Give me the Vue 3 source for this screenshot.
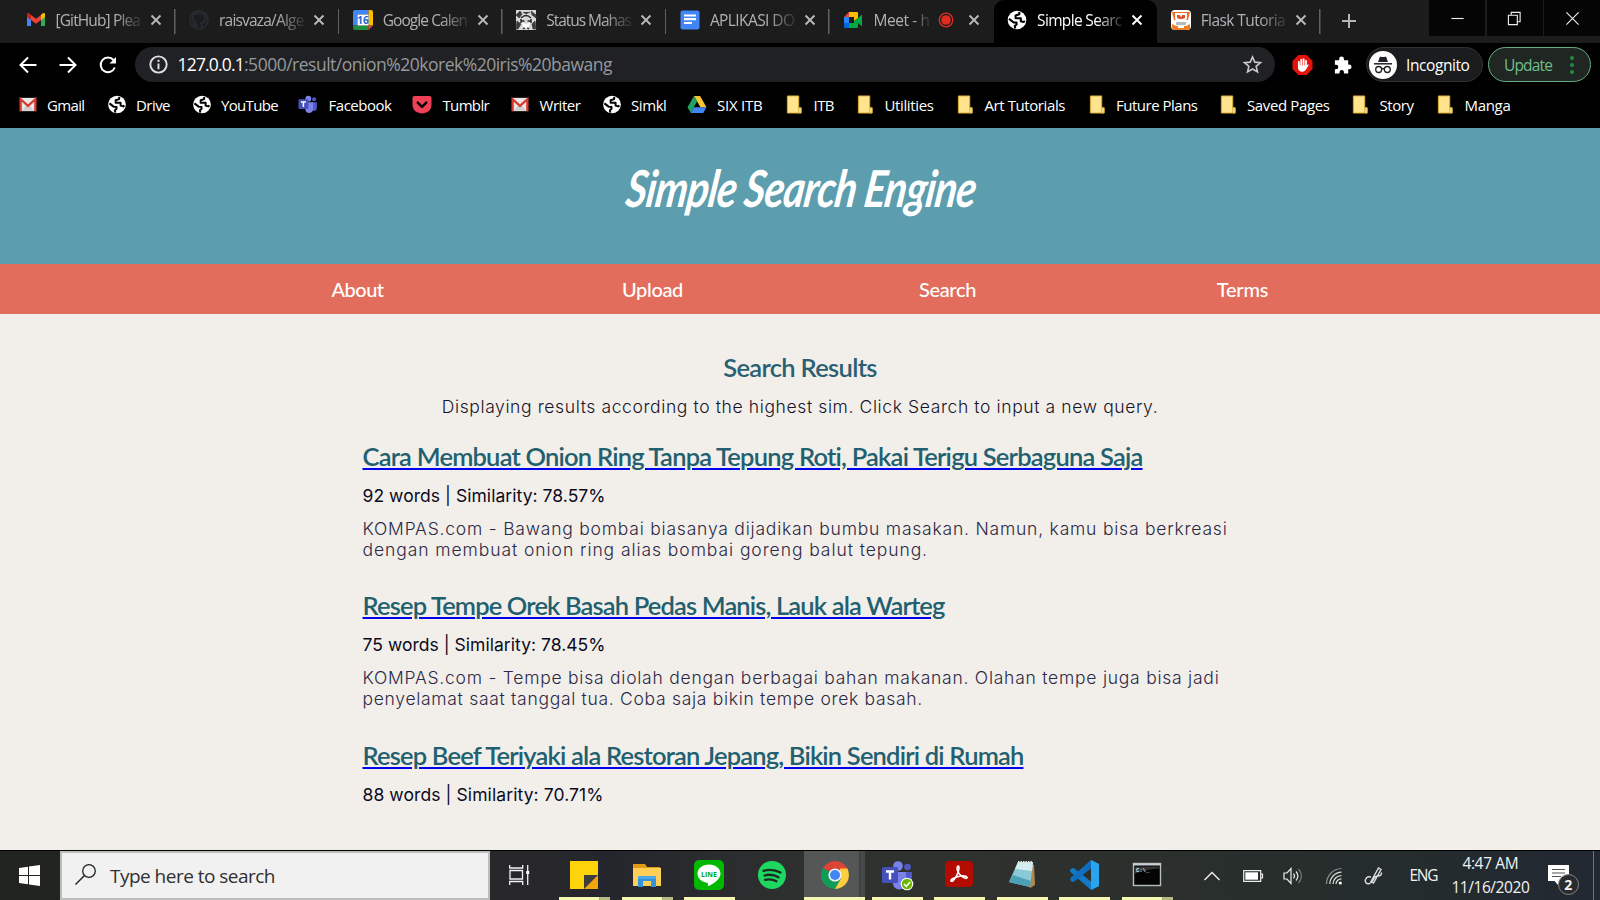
<script setup>
// Adjusts letter spacing so a label takes exactly the given width.
const vFit = {
  mounted(el, { value }) {
    if (!value) return
    const natural = el.getBoundingClientRect().width
    el.style.letterSpacing = ((value - natural) / el.textContent.length).toFixed(3) + 'px'
  },
}

const globe =
  '<circle cx="10" cy="10" r="9.300" fill="#fff"/><path d="M2 8.800l4.800 3.700h2.700v2l-1.700 1.500.4 2.500M12.300 2v2.300L8.600 5.500v2.700h5.200v3l2.700.8 1.300-1" fill="none" stroke="#000" stroke-width="2.100" stroke-linejoin="round"/>'
const gmailOld =
  '<rect x="1.500" y="3" width="17" height="14" fill="#e9e9e9"/><path d="M3.500 16.500l4.500-5.500h4l4.500 5.500z" fill="#cfcfcf"/><path d="M2.300 17V4.500l7.700 7 7.700-7V17" fill="none" stroke="#d93a2f" stroke-width="2.400"/>'
const folder =
  '<path d="M3 1h12v12.500h2.500V19H3z" fill="#ffe38d" stroke="#d9a92b" stroke-width="1"/><path d="M15 19v-5.500h2.500V19z" fill="#ffe99e" stroke="#c9a02c" stroke-width=".8"/>'
const teams =
  '<circle cx="16" cy="6" r="4.800" fill="#7b83eb"/><circle cx="25.500" cy="7" r="3.300" fill="#5059c9"/><path d="M22 12h8v9c0 4-3 6-6 5z" fill="#5059c9"/><path d="M11 12h13v11c0 8-13 9-13 0z" fill="#7b83eb"/><rect x="0" y="7" width="16" height="16" rx="1.500" fill="#4650ba"/><path d="M4 11.500h8M8 11.500v8" stroke="#fff" stroke-width="2.400"/>'

const art = {
  globe,
  gmailOld,
  folder,
  teams,
  gmail:
    '<path d="M1 4.500V16h4V8z" fill="#4285f4"/><path d="M15 8v8h4V4.500z" fill="#34a853"/><path d="M15 5v5l4-3V4.500c0-2-2-2-4 .5z" fill="#fbbc04"/><path d="M1 4.500V7l4 3V5C3 2.500 1 2.500 1 4.500z" fill="#c5221f"/><path d="M5 5l5 3.800L15 5v5l-5 3.800L5 10z" fill="#ea4335"/>',
  github:
    '<path d="M7.500 18.500v-3.200c-3 .5-3.500-1.300-4.300-2M12.500 18.500v-4c0-.8-.2-1.200-.6-1.600 3-.3 4.600-1.600 4.600-4.600 0-1.200-.4-2.100-1.100-2.900.2-.9.200-1.800-.1-2.600-1.100 0-2 .5-2.800 1.100a9 9 0 0 0-5 0C6.700 3.300 5.800 2.800 4.700 2.800c-.3.800-.3 1.700-.1 2.600C3.900 6.200 3.500 7.100 3.500 8.300c0 3 1.600 4.300 4.600 4.600" fill="none" stroke="#252b31" stroke-width="2"/><circle cx="10" cy="10" r="9" fill="none" stroke="#252b31" stroke-width="1.800"/>',
  calendar:
    '<path d="M0 2q0-2 2-2h13.500v4.500h-11v11H0z" fill="#4285f4"/><path d="M15.500 0H18q2 0 2 2v13.500h-4.500z" fill="#fbbc04"/><path d="M0 15.500h15.500V20H2q-2 0-2-2z" fill="#1e8e3e"/><path d="M15.500 15.500H20L15.500 20z" fill="#ea4335"/><path d="M4.500 4.500h11v11h-11z" fill="#fff"/><text x="10" y="13.600" text-anchor="middle" font-size="10" font-weight="700" font-family="Open Sans" fill="#1a66d6">16</text>',
  emblem:
    '<path d="M0 0h20v20H0z" fill="#d8d8d8"/><path d="M0 5l4-4 2 3-3 4zM15 1l5 4v3l-4-3zM1 11l4 3-3 5H0zM19 11l-3 3 1 5h3zM7 2l3 2 4-2" fill="#3a3a3a" stroke="#444" stroke-width=".8"/><path d="M5 8q5-5 10 0M5.500 11h3M11.500 11h3M5 9v4M15 9v4M7 19l3-2 3 2" fill="none" stroke="#292929" stroke-width="1.500"/><path d="M6 12.500l4 1.500 4-1.500-1 4-3 2-3-2z" fill="#fff"/>',
  docs:
    '<rect x=".5" y=".5" width="19" height="19" rx="2" fill="#4285f4"/><path d="M4 5.500h12M4 9.200h12M4 13h8" stroke="#fff" stroke-width="2.200"/>',
  meet:
    '<path d="M1 7l5-5v5z" fill="#ea4335"/><path d="M6 2h8q1 0 1 1v5l-4 3V7H6z" fill="#fbbc04"/><path d="M1 7h5v6H1z" fill="#2684fc"/><path d="M1 13h5v5H2q-1 0-1-1z" fill="#0066da"/><path d="M6 13h5v-2l4-3 4-3.500v12L15 13v4q0 1-1 1H6z" fill="#00a846"/>',
  flask:
    '<rect x="0" y="0" width="20" height="20" rx="4" fill="#fff"/><path d="M1 2h18l-2 8H3z" fill="#f26a21"/><path d="M4 3h12v6q-6 5-12 0z" fill="#fff"/><path d="M6 5h3v1.500h2V5h3v3q-4 2-8 0z" fill="#e34e26"/><path d="M5 12h10v3H5z" fill="#b9b9b9"/><path d="M1 14l4 2h10l4-2v5l-3 1H3l-2-2z" fill="#f47b20"/><path d="M7 16h6v2H7z" fill="#fff"/>',
  pocket:
    '<path d="M2 1h16q2 0 2 2v7c0 12.500-20 12.500-20 0V3q0-2 2-2z" fill="#ee4056"/><path d="M5.500 8l4.500 4.500L14.500 8" fill="none" stroke="#000" stroke-width="2.600" stroke-linecap="round" stroke-linejoin="round"/>',
  drive:
    '<path d="M6.800 1h6.400L20 13h-6.400z" fill="#fbc634"/><path d="M6.800 1L10 6.800 3.400 18.800 0 13z" fill="#1fa463"/><path d="M6.600 13H20l-3.400 5.900H3.300z" fill="#4285f4"/>',
  windows:
    '<path d="M0 3l9-1.300V10H0zM10 1.500L21 0v10H10zM0 11h9v8.300L0 18zM10 11h11v10l-11-1.500z" fill="#fff"/>',
  search:
    '<circle cx="14" cy="7" r="6.300" fill="none" stroke="#222" stroke-width="1.300"/><path d="M9.500 11.500L.5 20.500" stroke="#222" stroke-width="1.500"/>',
  taskview:
    '<path d="M.7 0v3h13V0M.7 20v-3.500h13V20M1 5.500h12.500v8.500H1zM18.700 0v20" fill="none" stroke="#f2f2f2" stroke-width="1.300"/><path d="M17.200 6h3v3h-3z" fill="#fff"/>',
  sticky:
    '<path d="M1 1h28v14L15 29H1z" fill="#ffd30a"/><path d="M15 15h14v14H15z" fill="#f0a70c"/><path d="M15 15h14L15 29z" fill="#3d3d3d"/>',
  explorer:
    '<path d="M1 4h12l2 3h13v5H1z" fill="#e09a12"/><path d="M1 8h28v18H1z" fill="#ffcf58"/><path d="M6 27V16h18v11h-5v-6h-8v6z" fill="#3592dc"/><path d="M6 16h18v3H6z" fill="#49a7eb"/>',
  line:
    '<rect width="30" height="30" rx="5" fill="#00b900"/><path d="M15 4.500c-6.600 0-11.500 4-11.500 9.200 0 5 4.500 8.300 9.500 9 1.500.3 1 1.500.8 3.500 3-1 12.700-6 12.700-12.500C26.500 8.500 21.600 4.500 15 4.500z" fill="#fff"/><text x="15" y="16.500" text-anchor="middle" font-size="7" font-weight="700" font-family="Open Sans" fill="#00a800">LINE</text>',
  spotify:
    '<circle cx="15" cy="15" r="14" fill="#1ed760"/><path d="M6.500 10.800c5.500-1.600 12-1 17 1.700M7.500 15.500c4.700-1.300 9.800-.7 14 1.700M8 19.800c4-1 8-.5 11.500 1.500" fill="none" stroke="#1c2a22" stroke-width="2.300" stroke-linecap="round"/>',
  chrome:
    '<path d="M15 15L2.900 8A14 14 0 0 1 27.100 8z" fill="#db4437"/><path d="M2.900 8A14 14 0 0 0 15 29l6-10.500-6-3.500z" fill="#0f9d58"/><path d="M27.100 8A14 14 0 0 1 15 29l6-10.500-1-7.500V8z" fill="#ffcd40"/><path d="M15 8h12.100" stroke="#db4437"/><circle cx="15" cy="15" r="6.600" fill="#f1f1f1"/><circle cx="15" cy="15" r="5" fill="#4285f4"/>',
  teamsBadge:
    teams + '<circle cx="25" cy="24" r="6.300" fill="#fff"/><circle cx="25" cy="24" r="5.200" fill="#6bb700"/><path d="M22 24l2.300 2.300 3.800-4.300" fill="none" stroke="#fff" stroke-width="1.500"/>',
  acrobat:
    '<rect x="1" y="1" width="28" height="26" rx="4" fill="#b30b00"/><path d="M7 21c-1-2 6-4.500 10-5 4-.4 6.500.4 6 1.900-1 1.700-7-2-9-5.900-1.500-3-1-6 .2-6 1.500 0 .8 5-1.500 9.500S8 22 7 21z" fill="none" stroke="#fff" stroke-width="1.600"/>',
  notepad:
    '<path d="M12 3l15 2 1 20-5 3z" fill="#b28a4a"/><path d="M11 2h15l-3 25-21-5z" fill="#8cc9d6"/><path d="M11 2h15l-1 9L8 9z" fill="#d3ecef"/><path d="M2 22l4-7 18 6-1 6z" fill="#4ba1b5"/><path d="M11 2h15" stroke="#dedede" stroke-width="2" stroke-dasharray="1.500 1"/>',
  vscode:
    '<path d="M22 0l8 4v22l-8 4L2 12.500Q0 11 1.500 9.500L3 8.300q1-.6 2 0L22 21.500z" fill="#1279c6"/><path d="M22 0v8.500L5 21.700q-1 .6-2 0l-1.500-1.200Q0 19 2 17.500z" fill="#0f6fbc"/><path d="M22 0l8 4v22l-8 4z" fill="#2aa3ef"/>',
  terminal:
    '<rect x="1.500" y="3.500" width="27" height="22" fill="#050505" stroke="#b9bdc2" stroke-width="1.400"/><path d="M1 4.500h28" stroke="#c9ced4" stroke-width="2"/><path d="M2.500 14V6.500h25v2Q14 9 2.500 14z" fill="#333"/><text x="4" y="12" font-size="5.500" font-weight="700" font-family="Liberation Mono" fill="#eee">C:\\_</text>',
  caret: '<path d="M2.500 14L10 6.500l7.500 7.500" fill="none" stroke="#eee" stroke-width="1.400"/>',
  battery:
    '<path d="M.7 4.700h17v10.600H.7zM18 8h1.500v4H18" fill="none" stroke="#eee" stroke-width="1.200"/><path d="M2.300 6.300H15v7.400H2.300z" fill="#fff"/>',
  volume:
    '<path d="M1 7h3l4-4.500v15L4 13H1z" fill="none" stroke="#eee" stroke-width="1.200"/><path d="M10.500 7.500q2 2.500 0 5M13 5.500q3.800 4.500 0 9" fill="none" stroke="#eee" stroke-width="1.200"/><path d="M15.500 3q6 7 0 14" fill="none" stroke="#777" stroke-width="1.200"/>',
  wifi:
    '<path d="M2.500 18A15.500 15.500 0 0 1 17.500 2.500" fill="none" stroke="#8b8f90" stroke-width="1.200"/><path d="M5.800 18A12 12 0 0 1 17.500 6.200M9 18a8.700 8.700 0 0 1 8.500-8.500M12 18a5.500 5.500 0 0 1 5.500-5.200" fill="none" stroke="#ddd" stroke-width="1.200"/><circle cx="16.300" cy="17" r="1.600" fill="#fff"/>',
  pen:
    '<path d="M7 15.500L14.500 2l2.500 1.500L9.500 17zM7 11c-4-1-6.500 2-5.500 5s5.500 2 7-1 2-5 5-5 5-1.500 3.500-3.500" fill="none" stroke="#ddd" stroke-width="1.400"/>',
}

const tabs = [
  { icon: 'gmail', title: '[GitHub] Plea' },
  { icon: 'github', title: 'raisvaza/Alge' },
  { icon: 'calendar', title: 'Google Calen' },
  { icon: 'emblem', title: 'Status Mahas' },
  { icon: 'docs', title: 'APLIKASI DO' },
  { icon: 'meet', title: 'Meet - h', rec: true },
  { icon: 'globe', title: 'Simple Searc', active: true },
  { icon: 'flask', title: 'Flask Tutoria' },
]

// x: left edge of the item, t: distance from the edge to the label, w: label width
const marks = [
  { x: 18, t: 29.5, w: 37.5, icon: 'gmailOld', label: 'Gmail' },
  { x: 107, t: 29.5, w: 34, icon: 'globe', label: 'Drive' },
  { x: 192, t: 29.5, w: 57, icon: 'globe', label: 'YouTube' },
  { x: 298, t: 31, w: 63, icon: 'teams', label: 'Facebook' },
  { x: 412, t: 31, w: 46.5, icon: 'pocket', label: 'Tumblr' },
  { x: 510, t: 30, w: 41, icon: 'gmailOld', label: 'Writer' },
  { x: 602, t: 29.5, w: 35.5, icon: 'globe', label: 'Simkl' },
  { x: 687, t: 30.5, w: 45.5, icon: 'drive', label: 'SIX ITB' },
  { x: 784, t: 30, w: 20.5, icon: 'folder', label: 'ITB' },
  { x: 855, t: 30, w: 49, icon: 'folder', label: 'Utilities' },
  { x: 955, t: 30, w: 80.5, icon: 'folder', label: 'Art Tutorials' },
  { x: 1087, t: 29.5, w: 81.5, icon: 'folder', label: 'Future Plans' },
  { x: 1218, t: 29.5, w: 82.5, icon: 'folder', label: 'Saved Pages' },
  { x: 1350, t: 30, w: 34, icon: 'folder', label: 'Story' },
  { x: 1435, t: 30, w: 46, icon: 'folder', label: 'Manga' },
]
const markColumns = marks.map((m, i) => (i < marks.length - 1 ? marks[i + 1].x - m.x + 'px' : '1fr')).join(' ')

const nav = [
  { label: 'About', w: 52 },
  { label: 'Upload', w: 61 },
  { label: 'Search', w: 57.2 },
  { label: 'Terms', w: 51.6 },
]

const results = [
  {
    title: 'Cara Membuat Onion Ring Tanpa Tepung Roti, Pakai Terigu Serbaguna Saja', w: 780.5,
    meta: '92 words | Similarity: 78.57%', mw: 243,
    lines: [
      { text: 'KOMPAS.com - Bawang bombai biasanya dijadikan bumbu masakan. Namun, kamu bisa berkreasi', w: 865 },
      { text: 'dengan membuat onion ring alias bombai goreng balut tepung.', w: 565.5 },
    ],
  },
  {
    title: 'Resep Tempe Orek Basah Pedas Manis, Lauk ala Warteg', w: 582,
    meta: '75 words | Similarity: 78.45%', mw: 243,
    lines: [
      { text: 'KOMPAS.com - Tempe bisa diolah dengan berbagai bahan makanan. Olahan tempe juga bisa jadi', w: 857 },
      { text: 'penyelamat saat tanggal tua. Coba saja bikin tempe orek basah.', w: 560.5 },
    ],
  },
  {
    title: 'Resep Beef Teriyaki ala Restoran Jepang, Bikin Sendiri di Rumah', w: 661,
    meta: '88 words | Similarity: 70.71%', mw: 241,
    lines: [],
  },
]

const apps = [
  { icon: 'sticky', run: 'stack' },
  { icon: 'explorer', run: 'stack' },
  { icon: 'line', run: 'one' },
  { icon: 'spotify', run: '' },
  { icon: 'chrome', run: 'wide', current: true },
  { icon: 'teamsBadge', run: 'one' },
  { icon: 'acrobat', run: 'one' },
  { icon: 'notepad', run: 'one' },
  { icon: 'vscode', run: 'one' },
  { icon: 'terminal', run: 'stack' },
]
const tray = ['caret', 'battery', 'volume', 'wifi', 'pen']
</script>

<template>
  <div class="screen">
    <div class="tabstrip">
      <div v-for="(t, i) in tabs" :key="i" class="tab" :class="{ active: t.active, last: tabs[i + 1]?.active }">
        <svg class="fav" viewBox="0 0 20 20" v-html="art[t.icon]"></svg>
        <div class="tab-title" :class="{ short: t.rec }"><span v-fit="t.rec ? 56 : 84.5">{{ t.title }}</span></div>
        <svg v-if="t.rec" class="rec" viewBox="0 0 16 16"><circle cx="8" cy="8" r="6.800" fill="none" stroke="#d93025" stroke-width="1.300" /><circle cx="8" cy="8" r="4.800" fill="#e02b20" /></svg>
        <svg class="x" viewBox="0 0 12 12"><path d="M1.500 1.500l9 9M10.500 1.500l-9 9" /></svg>
      </div>
      <svg class="plus" viewBox="0 0 16 16"><path d="M8 1v14M1 8h14" /></svg>
      <div class="controls">
        <div><svg viewBox="0 0 16 16"><path d="M1.500 8h13" /></svg></div>
        <div><svg viewBox="0 0 16 16"><path d="M1.500 4.500h9.500v10H1.500zM4.500 4.500v-3H14v10h-3" /></svg></div>
        <div><svg viewBox="0 0 16 16"><path d="M1.500 1.500l13 13M14.500 1.500l-13 13" /></svg></div>
      </div>
    </div>

    <div class="toolbar">
      <svg class="nav-ic" viewBox="0 0 20 20"><path d="M18.500 10H2.500M10 2.500L2.500 10l7.500 7.500" /></svg>
      <svg class="nav-ic" viewBox="0 0 20 20"><path d="M1.500 10h16M10 2.500l7.500 7.500-7.500 7.500" /></svg>
      <svg class="nav-ic" viewBox="0 0 20 20"><path d="M16.800 12.500A7.300 7.300 0 1 1 15.500 5l1.500 2" /><path d="M18 2v6.500h-6.500z" fill="#fff" stroke="none" /></svg>
      <div class="omnibox">
        <svg class="info" viewBox="0 0 20 20"><circle cx="10" cy="10" r="8.600" /><path d="M10 9v6M10 5v2.300" /></svg>
        <span v-fit="66.5" class="host">127.0.0.1</span><span v-fit="368" class="path">:5000/result/onion%20korek%20iris%20bawang</span>
        <svg class="star" viewBox="0 0 20 20"><path d="M10 2l2.400 5.500 6 .5-4.600 3.900 1.400 5.900L10 14.700l-5.200 3.100 1.400-5.900L1.600 8l6-.5z" /></svg>
      </div>
      <svg class="hand" viewBox="0 0 22 22"><path d="M6.500 0h9L22 6.500v9L15.500 22h-9L0 15.500v-9z" fill="#e3120b" /><path d="M7 13V7.500M9.600 12V5M12.200 12V4.500M14.800 12V6.500" stroke="#fff" stroke-width="2" stroke-linecap="round" /><path d="M6 11.500h9.800l1.200-1.200q1.200 0 .7 1L14.500 16.500q-1.300 2-3.500 2-5 0-5-5z" fill="#fff" /></svg>
      <svg class="puzzle" viewBox="0 0 20 20"><path d="M2 5.500h4.500V4a2.500 2.500 0 0 1 5 0v1.500H16V10h1a2.500 2.500 0 0 1 0 5h-1v4.500h-4.500V18a2.300 2.300 0 0 0-4.600 0v1.500H2V15h1.200a2.300 2.300 0 0 0 0-4.800H2z" fill="#fff" /></svg>
      <div class="incognito">
        <svg viewBox="0 0 28 28"><circle cx="14" cy="14" r="14" fill="#fff" /><path d="M9 11l2-5.500q3 1.200 6 0L19 11z" fill="#202124" /><path d="M5 12.800h18" stroke="#202124" stroke-width="1.500" /><circle cx="9.700" cy="18.500" r="3" fill="none" stroke="#202124" stroke-width="1.300" /><circle cx="18.300" cy="18.500" r="3" fill="none" stroke="#202124" stroke-width="1.300" /><path d="M12.700 18q1.300-1 2.600 0" fill="none" stroke="#202124" stroke-width="1.300" /></svg>
        <span v-fit="63.5">Incognito</span>
      </div>
      <div class="update"><span v-fit="48">Update</span><svg viewBox="0 0 6 20"><circle cx="3" cy="3" r="2" /><circle cx="3" cy="10" r="2" /><circle cx="3" cy="17" r="2" /></svg></div>
    </div>

    <div class="bookmarks" :style="{ gridTemplateColumns: markColumns }">
      <div v-for="m in marks" :key="m.label" class="mark" :style="{ gridTemplateColumns: m.t + 'px auto' }">
        <svg :viewBox="m.icon === 'teams' ? '0 0 31 31' : '0 0 20 20'" v-html="art[m.icon]"></svg>
        <span v-fit="m.w">{{ m.label }}</span>
      </div>
    </div>

    <header><h1>Simple Search Engine</h1></header>
    <nav>
      <a v-for="n in nav" :key="n.label"><span v-fit="n.w">{{ n.label }}</span></a>
    </nav>
    <main>
      <h2><span v-fit="153.5">Search Results</span></h2>
      <p class="lead"><span v-fit="716.5">Displaying results according to the highest sim. Click Search to input a new query.</span></p>
      <article v-for="r in results" :key="r.title">
        <a class="title"><span v-fit="r.w">{{ r.title }}</span></a>
        <div class="meta"><span v-fit="r.mw">{{ r.meta }}</span></div>
        <p v-if="r.lines.length"><span v-for="l in r.lines" :key="l.text" v-fit="l.w">{{ l.text }}</span></p>
      </article>
    </main>

    <footer>
      <div class="start"><svg viewBox="0 0 21 21" v-html="art.windows"></svg></div>
      <div class="searchbox"><svg viewBox="0 0 21 21" v-html="art.search"></svg><span v-fit="165">Type here to search</span></div>
      <div class="taskview"><svg viewBox="0 0 21 21" v-html="art.taskview"></svg></div>
      <div v-for="a in apps" :key="a.icon" class="app" :class="[a.run, { current: a.current }]">
        <svg viewBox="0 0 30 30" v-html="art[a.icon]"></svg>
        <i v-if="a.run"></i>
      </div>
      <div class="tray">
        <svg v-for="t in tray" :key="t" viewBox="0 0 20 20" v-html="art[t]"></svg>
      </div>
      <div class="lang"><span v-fit="28">ENG</span></div>
      <div class="clock"><span v-fit="56">4:47 AM</span><span v-fit="78">11/16/2020</span></div>
      <div class="notes">
        <svg viewBox="0 0 21 20"><path d="M0 0h21v16h-6l-4.500 4.500L6.500 16H0z" fill="#fff" /><path d="M4 4.500h13M4 8h13M4 11.500h9" stroke="#555" stroke-width="1.200" /></svg>
        <b>2</b>
      </div>
    </footer>
  </div>
</template>

<style>
html,
body {
  margin: 0;
  background: #f2efea;
}
</style>

<style scoped>
* { box-sizing: border-box; }
.screen {
  width: 1600px;
  height: 900px;
  overflow: hidden;
  display: grid;
  grid-template-rows: 42.5px 45px 40.5px 136px 50px 536px 50px;
  font-family: "Open Sans", "Noto Sans", sans-serif;
  font-size: 15.5px;
  background: #000;
}
span { display: inline-block; white-space: nowrap; flex: none; }
svg { display: block; flex: none; overflow: visible; }

.tabstrip { display: flex; align-items: center; padding-left: 12px; background: #1c1c1c; }
.tab {
  width: 163.600px;
  height: 42.500px;
  flex: none;
  display: flex;
  align-items: center;
  padding: 0 14px 2px 13.500px;
  color: #b0b2b5;
  background: linear-gradient(#606164, #606164) right 0 top 9px / 1.500px 25px no-repeat;
}
.tab.active { background: #000; color: #fff; border-radius: 10px 10px 0 0; box-shadow: 0 20px 0 #000; }
.tab.last { background: none; border-bottom-right-radius: 10px; }
.fav { width: 20px; height: 20px; margin-right: 10px; }
.tab-title {
  width: 86px;
  line-height: 40px;
  overflow: hidden;
  -webkit-mask-image: linear-gradient(90deg, #000 68%, transparent 104%);
  mask-image: linear-gradient(90deg, #000 68%, transparent 104%);
}
.tab-title.short { width: 57px; }
.rec { width: 16px; height: 16px; margin: 0 0 0 8px; }
.tab .x { width: 12px; height: 12px; margin-left: auto; stroke: #b8babd; stroke-width: 1.900; }
.tab.active .x { stroke: #fff; }
.plus { width: 16px; margin: 0 0 0 20px; stroke: #b5b5b5; stroke-width: 2; }
.controls { display: grid; grid-template-columns: 56px 56px 56px; gap: 1.500px; height: 36px; margin-left: auto; align-self: flex-start; }
.controls div { background: #050505; display: grid; place-items: center; }
.controls svg { width: 15px; height: 15px; fill: none; stroke: #eee; stroke-width: 1.200; }

.toolbar { display: flex; align-items: center; padding: 0 0 1px 17.500px; }
.nav-ic { width: 20px; height: 20px; margin-right: 20px; fill: none; stroke: #fff; stroke-width: 2; }
.omnibox {
  width: 1140px;
  height: 35px;
  margin-left: -2.500px;
  padding: 0 13px 0 13.500px;
  border-radius: 18px;
  display: flex;
  align-items: center;
  background: #202124;
  font-size: 17.500px;
  line-height: 35px;
}
.info { width: 19px; margin-right: 10px; fill: none; stroke: #e0e0e0; stroke-width: 2; }
.host { color: #fff; }
.path { color: #96999d; }
.star { width: 19px; margin-left: auto; fill: none; stroke: #c8c8c8; stroke-width: 1.700; }
.hand { width: 21px; height: 20px; margin-left: 17px; }
.puzzle { width: 19px; height: 19px; margin-left: 20px; }
.incognito { width: 117px; height: 35px; margin-left: 14px; padding-left: 2px; border: 1.500px solid #303134; border-radius: 18px; background: #1b1c1e; color: #fff; display: flex; align-items: center; }
.incognito svg { width: 28px; margin-right: 9px; }
.update { width: 103px; height: 35px; margin-left: 5px; padding-left: 15px; border: 1.500px solid #64ad7d; border-radius: 18px; background: #202723; color: #70bd8b; display: flex; align-items: center; }
.update svg { width: 6px; height: 20px; margin-left: 17px; fill: #1e8e3e; }

.bookmarks { display: grid; padding: 7px 0 0 17.500px; color: #fff; align-items: start; }
.mark { display: grid; align-items: center; justify-items: start; line-height: 20px; font-size: 15px; }
.mark svg { width: 20px; height: 19px; }

header { background: #5c9dae; text-align: center; }
h1 {
  margin: 0;
  padding: 33px 0 0 10px;
  font: italic 700 51px/54px Lato, "Open Sans", sans-serif;
  letter-spacing: -1px;
  color: #fff;
  transform: scaleX(.8) skewX(-10deg);
}
nav { background: #e26d5c; display: grid; grid-template-columns: repeat(4, 295px); justify-content: center; text-align: center; }
nav a { font: 500 20px/50px Lato, sans-serif; color: #fff; }

main { background: #f2efea; padding: 37.500px 0 0 362.500px; overflow: hidden; }
h2 { margin: 0 362.500px 14px 0; text-align: center; font: 600 25.500px/30px Lato, sans-serif; color: #2a6072; }
.lead { margin: 0 362.500px 24px 0; text-align: center; font: 300 17.500px/21px Inter, sans-serif; color: #16142b; }
article { height: 149.500px; font-family: Inter, sans-serif; }
.title { display: block; font: 600 25.500px/30px Lato, sans-serif; color: #22606f; }
.title span { text-decoration: underline; text-decoration-color: #0000ee; text-decoration-thickness: 2px; text-underline-offset: 1.500px; }
.meta { margin-top: 14px; font-size: 17.500px; line-height: 21px; color: #0b0a1e; }
article p { margin: 12px 0 0; font-weight: 300; font-size: 17.500px; line-height: 21px; color: #2c2946; display: flex; flex-direction: column; align-items: flex-start; }

footer { display: flex; background: linear-gradient(90deg, #22241f 0, #22241f 4%, #28282a 31%, #25262d 38%, #30322f 52%, #2c302d 70%, #252d2c 85%, #222832 100%); border-top: 1px solid #000; color: #f2f2f2; }
.start { width: 60px; padding-right: 1.500px; display: grid; place-items: center; }
.start svg { width: 21px; height: 21px; }
.searchbox { width: 430px; border: 2px solid #bdbdbd; background: #f1f1f1; color: #303030; display: flex; align-items: center; padding: 0 0 0 13px; font-size: 19px; }
.searchbox span { padding-top: 1px; }
.searchbox svg { width: 21px; margin: -3px 14px 0 0; }
.taskview { width: 63px; padding-left: 19px; display: grid; align-items: center; }
.taskview svg { width: 21px; }
.app { width: 62.500px; position: relative; display: grid; justify-items: center; align-items: start; padding-top: 9px; }
.app svg { width: 30px; height: 30px; }
.app i { position: absolute; left: 6px; bottom: 0; width: 51px; height: 3px; background: #f6f7b0; }
.app.stack i { background: linear-gradient(90deg, #f6f7b0 78%, #8e9069 78%, #b9bb85 80%); }
.app.current { background: linear-gradient(90deg, #555756 55px, #3a3c3b 55px, #484a49 57px, #484a49 61px, transparent 61px); left: 1px; }
.app.wide i { left: 0; width: 61px; }
.tray { display: flex; align-items: center; gap: 20.600px; margin-left: 24px; }
.tray svg { width: 20px; height: 20px; }
.lang { margin-left: 25px; line-height: 49px; }
.clock { width: 78px; margin-left: 14px; padding-top: 1px; display: flex; flex-direction: column; align-items: center; line-height: 23.500px; }
.notes { position: relative; width: 46px; margin-left: 18.500px; padding-top: 14px; border-right: 1.500px solid #6c7380; }
.notes svg { width: 21px; height: 20px; }
.notes b { position: absolute; left: 10px; top: 23px; width: 21px; height: 21px; border: 1px solid #858585; border-radius: 50%; background: #292b2e; text-align: center; font-size: 14px; line-height: 19px; }
</style>
